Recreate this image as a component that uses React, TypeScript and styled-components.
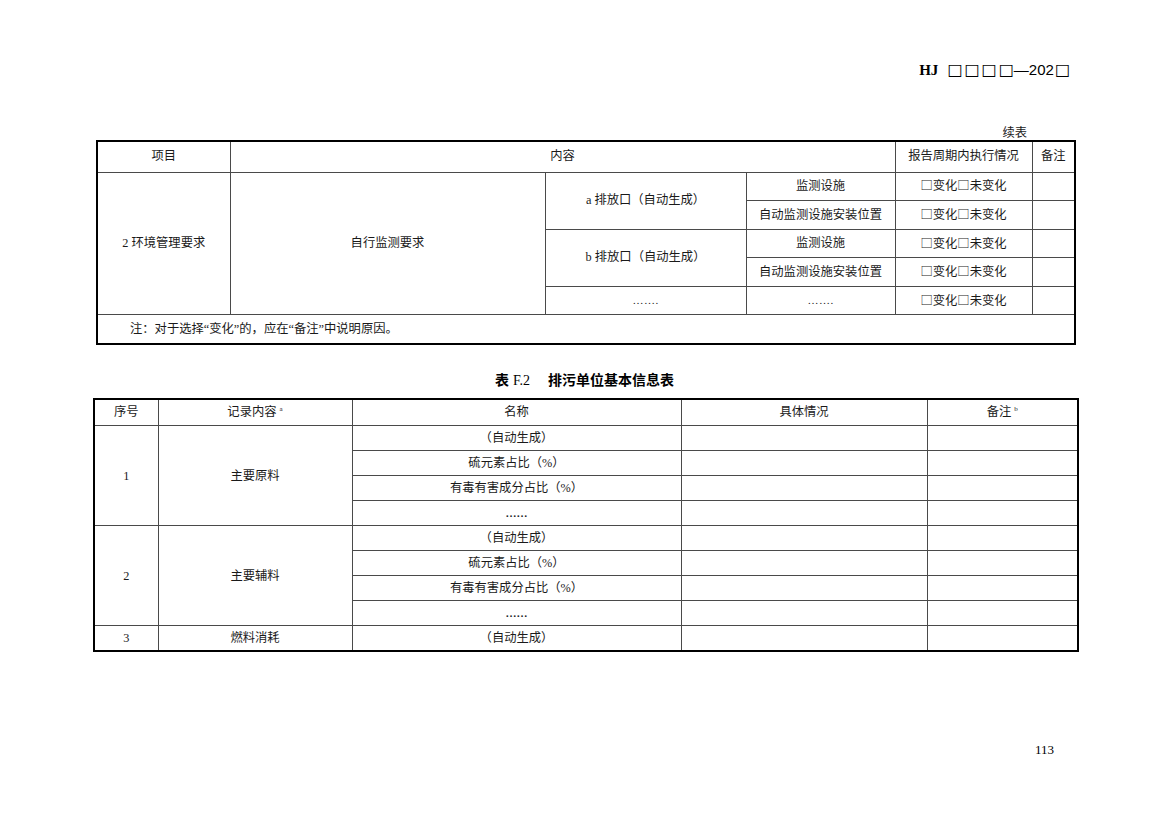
import React from 'react';
import styled, { createGlobalStyle } from 'styled-components';

const Global = createGlobalStyle`
  html, body { margin: 0; padding: 0; background: #fff; }
  body {
    font-family: "Liberation Serif", "Noto Sans CJK SC", serif;
    color: #1a1a1a;
  }
`;

const Page = styled.div`
  width: 1169px;
  height: 826px;
  box-sizing: border-box;
  padding-top: 60px;
  display: flex;
  flex-direction: column;
  background: #fff;
`;

const DocHeader = styled.div`
  display: flex;
  justify-content: flex-end;
  align-items: baseline;
  padding-right: 97px;
  height: 20px;
  line-height: 20px;
  font-size: 15px;
  color: #000;
`;

const Code = styled.span`
  font-family: "Liberation Serif", serif;
  font-weight: bold;
  margin-right: 9px;
`;

const Boxes = styled.span`
  font-family: "DejaVu Sans", sans-serif;
  font-size: 16px;
  letter-spacing: 2px;
  color: #000;
`;

const Year = styled.span`
  font-family: "Liberation Sans", sans-serif;
  font-size: 15px;
  margin-left: -2px;
  margin-right: 1px;
`;

const Continued = styled.div`
  margin-top: 44px;
  padding-right: 142px;
  text-align: right;
  font-size: 12.3px;
  line-height: 16px;
  font-family: "Noto Sans CJK SC", serif;
`;

const Table = styled.table<{ $left: number; $width: number }>`
  margin-left: ${(p) => p.$left}px;
  width: ${(p) => p.$width}px;
  border-collapse: collapse;
  table-layout: fixed;
  border: 2px solid #000;
  font-size: 12.3px;
`;

const Row = styled.tr<{ $h: number }>`
  height: ${(p) => p.$h}px;
`;

const Cell = styled.td<{ $align?: string }>`
  border: 1px solid #4a4a4a;
  padding: 0;
  text-align: ${(p) => p.$align || 'center'};
  vertical-align: middle;
  line-height: 1.2;
  white-space: nowrap;
`;

const NoteCell = styled(Cell)`
  padding-left: 32px;
`;

const Check = styled.span`
  font-family: "Noto Sans CJK SC", sans-serif;
`;

const Dots = styled.span`
  font-family: "Liberation Serif", serif;
  font-size: 11px;
  letter-spacing: 0.5px;
`;

const BoldDots = styled.span`
  font-family: "Liberation Serif", serif;
  font-weight: bold;
  font-size: 11px;
`;

const Sup = styled.sup`
  font-size: 7px;
  vertical-align: 5px;
  margin-left: 3px;
  font-family: "Liberation Serif", serif;
`;

const Title = styled.div`
  margin-top: 25px;
  margin-bottom: 8px;
  text-align: center;
  font-size: 14px;
  line-height: 18px;
  font-weight: bold;
  font-family: "Noto Sans CJK SC", sans-serif;
  color: #000;
`;

const TitleCode = styled.span`
  font-family: "Liberation Serif", serif;
  font-weight: normal;
  margin-left: 4px;
  margin-right: 18px;
`;

const PageNumber = styled.div`
  margin-top: auto;
  padding-right: 115px;
  padding-bottom: 68px;
  text-align: right;
  font-size: 13px;
  line-height: 16px;
  font-family: "Liberation Serif", serif;
  color: #000;
`;

const CHECK = '□变化□未变化';

const table1Cols = [133, 315, 201, 149, 137, 43];
const table2Cols = [64, 194, 329, 246, 151];

const materialRows = [
  '（自动生成）',
  '硫元素占比（%）',
  '有毒有害成分占比（%）',
];

function MaterialGroup({ no, name }: { no: string; name: string }) {
  return (
    <>
      <Row $h={25}>
        <Cell rowSpan={4}>{no}</Cell>
        <Cell rowSpan={4}>{name}</Cell>
        <Cell>{materialRows[0]}</Cell>
        <Cell />
        <Cell />
      </Row>
      {materialRows.slice(1).map((r) => (
        <Row $h={25} key={r}>
          <Cell>{r}</Cell>
          <Cell />
          <Cell />
        </Row>
      ))}
      <Row $h={25}>
        <Cell><BoldDots>……</BoldDots></Cell>
        <Cell />
        <Cell />
      </Row>
    </>
  );
}

export default function App() {
  return (
    <Page>
      <Global />
      <DocHeader>
        <Code>HJ</Code>
        <Boxes>□□□□</Boxes>
        <Year>—202</Year>
        <Boxes>□</Boxes>
      </DocHeader>
      <Continued>续表</Continued>
      <Table $left={96} $width={978}>
        <colgroup>
          {table1Cols.map((w, i) => (
            <col key={i} style={{ width: w }} />
          ))}
        </colgroup>
        <tbody>
          <Row $h={31}>
            <Cell>项目</Cell>
            <Cell colSpan={3}>内容</Cell>
            <Cell>报告周期内执行情况</Cell>
            <Cell>备注</Cell>
          </Row>
          <Row $h={28.6}>
            <Cell rowSpan={5}>2 环境管理要求</Cell>
            <Cell rowSpan={5}>自行监测要求</Cell>
            <Cell rowSpan={2}>a 排放口（自动生成）</Cell>
            <Cell>监测设施</Cell>
            <Cell><Check>{CHECK}</Check></Cell>
            <Cell />
          </Row>
          <Row $h={28.6}>
            <Cell>自动监测设施安装位置</Cell>
            <Cell><Check>{CHECK}</Check></Cell>
            <Cell />
          </Row>
          <Row $h={28.6}>
            <Cell rowSpan={2}>b 排放口（自动生成）</Cell>
            <Cell>监测设施</Cell>
            <Cell><Check>{CHECK}</Check></Cell>
            <Cell />
          </Row>
          <Row $h={28.6}>
            <Cell>自动监测设施安装位置</Cell>
            <Cell><Check>{CHECK}</Check></Cell>
            <Cell />
          </Row>
          <Row $h={28.6}>
            <Cell><Dots>…….</Dots></Cell>
            <Cell><Dots>…….</Dots></Cell>
            <Cell><Check>{CHECK}</Check></Cell>
            <Cell />
          </Row>
          <Row $h={29}>
            <NoteCell $align="left" colSpan={6}>
              注：对于选择“变化”的，应在“备注”中说明原因。
            </NoteCell>
          </Row>
        </tbody>
      </Table>
      <Title>
        表<TitleCode>F.2</TitleCode>排污单位基本信息表
      </Title>
      <Table $left={93} $width={984}>
        <colgroup>
          {table2Cols.map((w, i) => (
            <col key={i} style={{ width: w }} />
          ))}
        </colgroup>
        <tbody>
          <Row $h={27}>
            <Cell>序号</Cell>
            <Cell>记录内容<Sup>a</Sup></Cell>
            <Cell>名称</Cell>
            <Cell>具体情况</Cell>
            <Cell>备注<Sup>b</Sup></Cell>
          </Row>
          <MaterialGroup no="1" name="主要原料" />
          <MaterialGroup no="2" name="主要辅料" />
          <Row $h={25}>
            <Cell>3</Cell>
            <Cell>燃料消耗</Cell>
            <Cell>（自动生成）</Cell>
            <Cell />
            <Cell />
          </Row>
        </tbody>
      </Table>
      <PageNumber>113</PageNumber>
    </Page>
  );
}
